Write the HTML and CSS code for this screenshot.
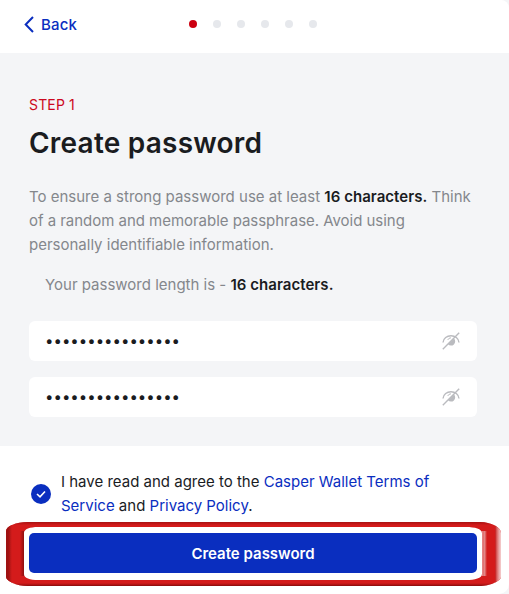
FILE: index.html
```html
<!DOCTYPE html>
<html lang="en">
<head>
<meta charset="utf-8">
<title>Create password</title>
<link rel="stylesheet" href="styles.css">
</head>
<body>
<div class="wallet">
  <header class="topbar">
    <a class="back"><svg width="10" height="18" viewBox="0 0 10 18"><path d="M9 1 1.7 8.5 9 16" fill="none" stroke="currentColor" stroke-width="2"/></svg><span>Back</span></a>
    <div class="dots"><i class="dot active"></i><i class="dot"></i><i class="dot"></i><i class="dot"></i><i class="dot"></i><i class="dot"></i></div>
  </header>
  <main class="content">
    <div class="step">STEP 1</div>
    <h1 class="title">Create password</h1>
    <p class="intro">To ensure a strong password use at least <b>16 characters.</b> Think<br><span class="tight">of a random and memorable passphrase. Avoid using</span><br>personally identifiable information.</p>
    <p class="length">Your password length is - <b>16 characters.</b></p>
    <div class="field"><span class="mask">••••••••••••••••</span>
      <svg class="eye" width="18" height="18" viewBox="0 0 18 18"><path d="M1 10.5C1.5 1.5 16.5 1.5 17 10.5" fill="none" stroke="currentColor" stroke-width="1.4"/><path d="M5.7 8A3.6 3.6 0 0 1 9 5.8" fill="none" stroke="currentColor" stroke-width="1"/><path d="M12 6.5A3.7 3.7 0 1 1 6 12.3Z" fill="currentColor"/><path d="M.8 17.2 17.2.8" stroke="currentColor" stroke-width="1.4"/></svg>
    </div>
    <div class="field"><span class="mask">••••••••••••••••</span>
      <svg class="eye" width="18" height="18" viewBox="0 0 18 18"><path d="M1 10.5C1.5 1.5 16.5 1.5 17 10.5" fill="none" stroke="currentColor" stroke-width="1.4"/><path d="M5.7 8A3.6 3.6 0 0 1 9 5.8" fill="none" stroke="currentColor" stroke-width="1"/><path d="M12 6.5A3.7 3.7 0 1 1 6 12.3Z" fill="currentColor"/><path d="M.8 17.2 17.2.8" stroke="currentColor" stroke-width="1.4"/></svg>
    </div>
  </main>
  <footer class="footer">
    <div class="terms">
      <svg class="check" width="20" height="20" viewBox="0 0 20 20"><circle cx="10" cy="10" r="10" fill="#0a2ebf"/><path d="M6 10 9 12.8 14 7.5" fill="none" stroke="#fff" stroke-width="1.6"/></svg>
      <p class="agree">I have read and agree to the <a>Casper Wallet Terms of<br>Service</a> and <a>Privacy Policy</a>.</p>
    </div>
    <button class="submit">Create password</button>
  </footer>
  <svg class="highlight" width="509" height="76" viewBox="0 0 509 76">
    <defs>
      <linearGradient id="left-outer"><stop offset="0" stop-color="#a01212"/><stop offset=".35" stop-color="#9c1212"/><stop offset="1" stop-color="#d41b1b"/></linearGradient>
      <linearGradient id="left-inner"><stop offset="0" stop-color="#d41b1b"/><stop offset="1" stop-color="#8e0f10"/></linearGradient>
      <linearGradient id="right-inner"><stop offset="0" stop-color="#f0b8b8"/><stop offset=".35" stop-color="#df6c6c"/><stop offset=".6" stop-color="#e38888"/><stop offset="1" stop-color="#d41b1b"/></linearGradient>
      <linearGradient id="right-outer"><stop offset="0" stop-color="#c01818"/><stop offset=".3" stop-color="#d86060"/><stop offset=".65" stop-color="#e9a0a0"/><stop offset="1" stop-color="#f5d0d0"/></linearGradient>
      <linearGradient id="edge" x1="0" y1="0" x2="0" y2="1"><stop offset="0" stop-color="#a81212"/><stop offset=".05" stop-color="#a81212" stop-opacity="0"/><stop offset=".95" stop-color="#a81212" stop-opacity="0"/><stop offset="1" stop-color="#850b0b"/></linearGradient>
      <clipPath id="ring"><path clip-rule="evenodd" d="M28 4H480C491 4 501 9 501 15V59C501 63 490 68 479 68H28C16 68 6 63 6 59V13C6 8 16 4 28 4ZM38 9C30 9 24 11 24 15V56C24 60 30 62 38 62H466C475 62 482 60 482 56V15C482 11 475 9 466 9Z"/></clipPath>
    </defs>
    <g clip-path="url(#ring)">
      <rect x="6" y="4" width="495" height="64" fill="#d41b1b"/>
      <rect x="6" y="4" width="490" height="64" fill="url(#edge)"/>
      <rect x="6" y="4" width="6" height="64" fill="url(#left-outer)"/>
      <rect x="20" y="13" width="4" height="45" fill="url(#left-inner)"/>
      <rect x="481" y="13" width="6" height="45" fill="url(#right-inner)"/>
      <rect x="495" y="4" width="6" height="64" fill="url(#right-outer)"/>
    </g>
  </svg>
</div>
</body>
</html>
```
FILE: styles.css
```css
* { box-sizing: border-box; }
body { margin: 0; background: #f4f5f7; font-family: Inter, "Liberation Sans", sans-serif; font-size: 15px; line-height: 24px; color: #1a1c1f; }
.wallet { position: relative; height: 594px; overflow: hidden; background: #fff; border-radius: 0 8px 10px 0; }
.topbar { height: 52.5px; display: flex; align-items: flex-start; padding: 12.5px 24px 0; }
.back { display: flex; align-items: center; gap: 7px; width: 165px; color: #0a2ebf; font-weight: 500; letter-spacing: .15px; }
.dots { display: flex; gap: 16px; padding-top: 7.5px; }
.dot { width: 8px; height: 8px; border-radius: 50%; background: #e6e8ec; }
.dot.active { background: #cc0010; }
.content { height: 393.5px; padding: 42.5px 32px 0 29px; background: #f4f5f7; }
.step { font-size: 14px; line-height: 20px; color: #cc0820; letter-spacing: .15px; }
.title { margin: 10px 0 24px; font-size: 28px; line-height: 36px; font-weight: 600; letter-spacing: .22px; }
.intro, .length { margin: 0; color: #84878c; }
.tight { letter-spacing: -.03px; }
.length { padding: 16px 16px 23.5px; }
b { font-weight: 600; color: #1a1c1f; letter-spacing: .04px; }
.field { height: 40px; margin-bottom: 16px; padding: 0 17px 0 16px; border-radius: 6px; background: #fff; display: flex; align-items: center; justify-content: space-between; }
.eye { color: #babbbf; }
.footer { padding: 24px 32px 0 29px; }
.terms { display: flex; gap: 10px; padding-left: 2px; }
.check { margin-top: 13.5px; flex: none; }
.agree { margin: 0; }
.agree a { color: #0a2ebf; }
.submit { display: block; width: 100%; height: 40px; margin-top: 15px; padding-top: 2px; border: 0; border-radius: 5px; background: #0a2ebf; color: #fff; font: 600 15px/24px Inter, "Liberation Sans", sans-serif; }
.highlight { position: absolute; left: 0; top: 518px; pointer-events: none; }
```
